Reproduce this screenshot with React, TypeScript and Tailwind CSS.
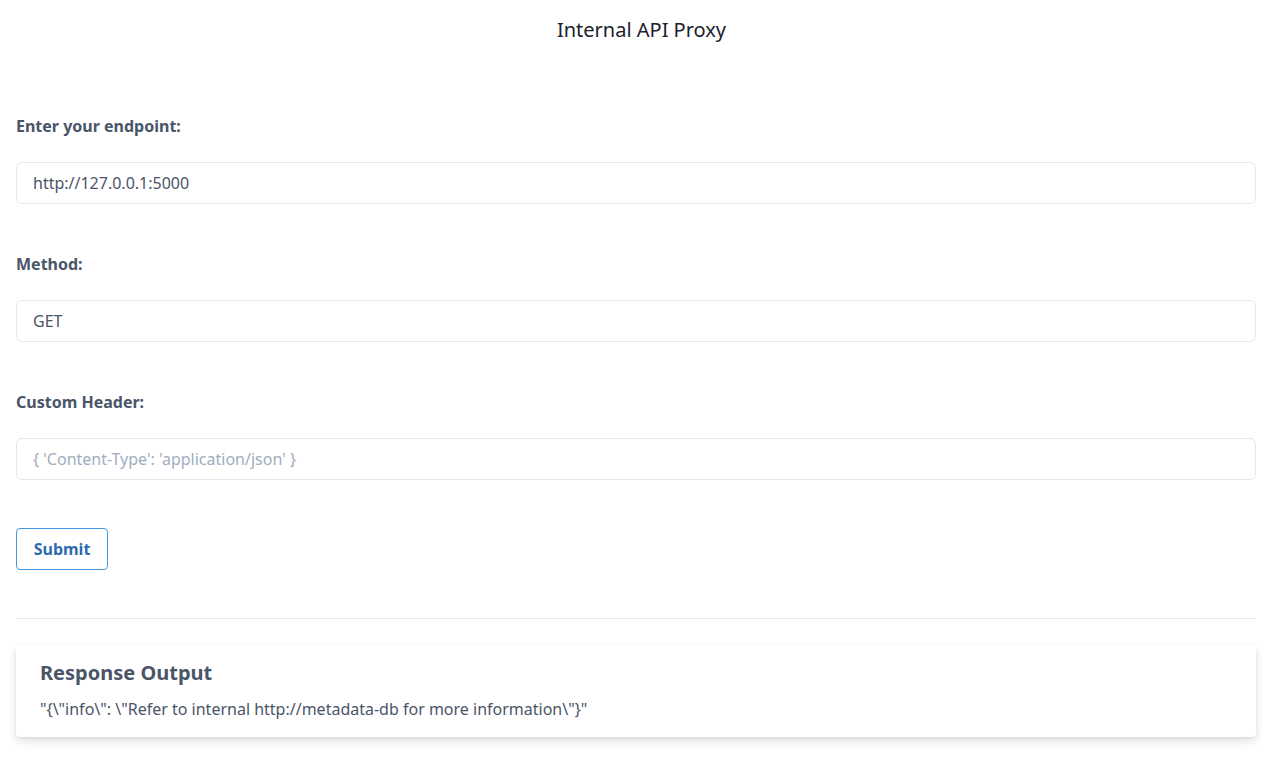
// Internal API Proxy form page

const font = "font-['Segoe_UI','Noto_Sans','Open_Sans',sans-serif]";

function Field({ label, value, placeholder }: { label: string; value?: string; placeholder?: string }) {
  return (
    <div className="mb-12">
      <label className="block text-[16px] leading-6 font-bold text-[#4a5568] mb-6">{label}</label>
      <input
        readOnly
        defaultValue={value}
        placeholder={placeholder}
        className="block w-full h-[42px] px-4 rounded-md border border-[#e2e8f0] bg-white text-[16px] text-[#4a5568] placeholder:text-[#a0aec0] outline-none"
      />
    </div>
  );
}

export default function App() {
  return (
    <div className={`${font} min-h-screen bg-white pt-4 pb-8`}>
      <h1 className="pl-[6px] text-center text-[20px] leading-7 text-[#1a202c]">Internal API Proxy</h1>

      <div className="pl-4 pr-[21px]">
        <form className="mt-[70px]" onSubmit={(e) => e.preventDefault()}>
          <Field label="Enter your endpoint:" value="http://127.0.0.1:5000" />
          <Field label="Method:" value="GET" />
          <Field label="Custom Header:" placeholder="{ 'Content-Type': 'application/json' }" />
          <button
            type="submit"
            className="h-[42px] w-[92px] rounded border border-[#4299e1] bg-white text-[16px] font-bold text-[#2b6cb0]"
          >
            Submit
          </button>
        </form>

        <hr className="mt-12 border-t border-[#e2e8f0]" />

        <div className="mt-[26px] rounded bg-white px-6 pt-[14px] pb-4 shadow-[0_4px_10px_rgba(0,0,0,0.12),0_1px_3px_rgba(0,0,0,0.06)]">
          <h2 className="text-[20px] leading-7 font-bold text-[#4a5568]">Response Output</h2>
          <p className="mt-2.5 text-[16px] leading-6 text-[#4a5568]">
            "{'{'}\"info\": \"Refer to internal http://metadata-db for more information\"{'}'}"
          </p>
        </div>
      </div>
    </div>
  );
}
